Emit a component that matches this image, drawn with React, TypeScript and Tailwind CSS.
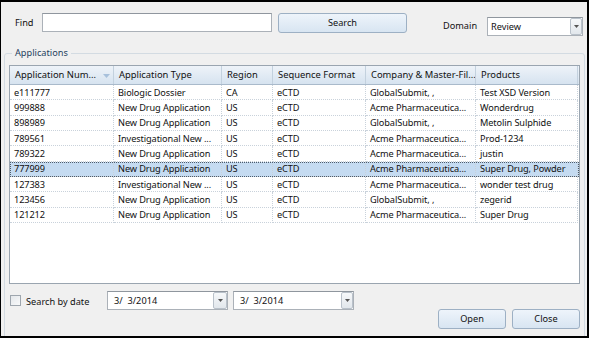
import React from "react";

const cols = [104, 108, 51, 93, 110, 102];
const headers = ["Application Num...", "Application Type", "Region", "Sequence Format", "Company & Master-Fil...", "Products"];
const rows: string[][] = [
  ["e111777", "Biologic Dossier", "CA", "eCTD", "GlobalSubmit, ,", "Test XSD Version"],
  ["999888", "New Drug Application", "US", "eCTD", "Acme Pharmaceutica...", "Wonderdrug"],
  ["898989", "New Drug Application", "US", "eCTD", "GlobalSubmit, ,", "Metolin Sulphide"],
  ["789561", "Investigational New ...", "US", "eCTD", "Acme Pharmaceutica...", "Prod-1234"],
  ["789322", "New Drug Application", "US", "eCTD", "Acme Pharmaceutica...", "justin"],
  ["777999", "New Drug Application", "US", "eCTD", "Acme Pharmaceutica...", "Super Drug, Powder"],
  ["127383", "Investigational New ...", "US", "eCTD", "Acme Pharmaceutica...", "wonder test drug"],
  ["123456", "New Drug Application", "US", "eCTD", "GlobalSubmit, ,", "zegerid"],
  ["121212", "New Drug Application", "US", "eCTD", "Acme Pharmaceutica...", "Super Drug"],
];

function DropBtn({ className }: { className?: string }) {
  return (
    <div
      className={
        "flex items-center justify-center border border-[#b9c1ca] rounded-[2px] bg-gradient-to-b from-[#f6f8fa] to-[#e2e7ec] " +
        (className ?? "")
      }
    >
      <svg width="5" height="3" viewBox="0 0 5 3">
        <path d="M0 0 L5 0 L2.5 3 Z" fill="#555" />
      </svg>
    </div>
  );
}

function WinButton({ label, className }: { label: string; className?: string }) {
  return (
    <div
      className={
        "flex items-center justify-center border border-[#9db0c4] rounded-[3px] bg-gradient-to-b from-[#eef4fb] to-[#d8e5f2] text-[#111] " +
        (className ?? "")
      }
    >
      {label}
    </div>
  );
}

export default function App() {
  return (
    <div className="w-[589px] h-[338px] overflow-hidden bg-[#f0f0f0] border-black border-t-2 border-l border-r-2 border-b-2 font-['Noto_Sans',sans-serif] text-[9.2px] text-[#111] leading-none">
      {/* top row */}
      <div className="h-[44px] flex items-start">
        <div className="ml-[14px] mt-[16px] w-[27px]">Find</div>
        <div className="mt-[11px] w-[230px] h-[19px] bg-white border border-[#abb1b8] border-t-[#8f969e]" />
        <WinButton label="Search" className="ml-[6px] mt-[11px] w-[129px] h-[20px]" />
        <div className="ml-[36px] mt-[19px] w-[44px]">Domain</div>
        <div className="mt-[15px] w-[96px] h-[19px] bg-white border border-[#abb1b8] border-t-[#8f969e] flex items-stretch">
          <div className="flex-1 pl-[3px] flex items-center">Review</div>
          <DropBtn className="w-[12px] m-0" />
        </div>
      </div>

      {/* group box */}
      <fieldset className="ml-[3px] mr-[2px] h-[320px] border border-[#d3dbe2] rounded-[3px] p-0">
        <legend className="ml-[7px] px-[3px] h-[14px] leading-[14px] text-[#253f5e]">Applications</legend>

        {/* grid */}
        <div className="ml-[4px] mt-[5px] w-[571px] h-[219px] bg-white border border-[#9aa5b0] overflow-hidden">
          <div className="flex h-[19px] border-b border-[#a9bacb] bg-gradient-to-b from-[#eef3f9] to-[#d6e3f0] text-[9.4px]">
            {headers.map((h, i) => (
              <div
                key={h}
                style={{ width: cols[i] }}
                className="relative flex items-center pl-[5px] border-r border-[#c3d1de] whitespace-nowrap overflow-hidden"
              >
                {h}
                {i === 0 && (
                  <svg className="absolute left-[93px] top-[8px]" width="7" height="4" viewBox="0 0 7 4">
                    <path d="M0 0 L7 0 L3.5 4 Z" fill="#a7c0db" />
                  </svg>
                )}
              </div>
            ))}
          </div>
          {rows.map((r, ri) => (
            <div
              key={ri}
              className={
                "flex h-[15.33px] " +
                (ri === 5 ? "bg-[#c5dbf1] outline outline-1 outline-dotted outline-[#4d5c6b] -outline-offset-1" : "")
              }
            >
              {r.map((c, ci) => (
                <div
                  key={ci}
                  style={{ width: cols[ci] }}
                  className="flex items-center pl-[4px] border-r border-b border-dotted border-[#c9d2db] whitespace-nowrap overflow-hidden tracking-[-0.1px]"
                >
                  {c}
                </div>
              ))}
            </div>
          ))}
        </div>

        {/* bottom row */}
        <div className="flex items-start mt-[7px]">
          <div className="ml-[5px] mt-[4px] w-[11px] h-[11px] border border-[#9ea6ae] bg-gradient-to-br from-[#e4e7ea] to-[#f8f9fa]" />
          <div className="ml-[5px] mt-[6px] w-[81px]">Search by date</div>
          <div className="w-[121px] h-[19px] bg-white border border-[#abb1b8] border-t-[#8f969e] flex items-stretch">
            <div className="flex-1 pl-[6px] flex items-center whitespace-pre">3/  3/2014</div>
            <DropBtn className="w-[14px]" />
          </div>
          <div className="ml-[5px] w-[121px] h-[19px] bg-white border border-[#abb1b8] border-t-[#8f969e] flex items-stretch">
            <div className="flex-1 pl-[6px] flex items-center whitespace-pre">3/  3/2014</div>
            <DropBtn className="w-[12px]" />
          </div>
          <WinButton label="Open" className="ml-[84px] mt-[18px] w-[68px] h-[20px]" />
          <WinButton label="Close" className="ml-[6px] mt-[18px] w-[68px] h-[20px]" />
        </div>
      </fieldset>
    </div>
  );
}
